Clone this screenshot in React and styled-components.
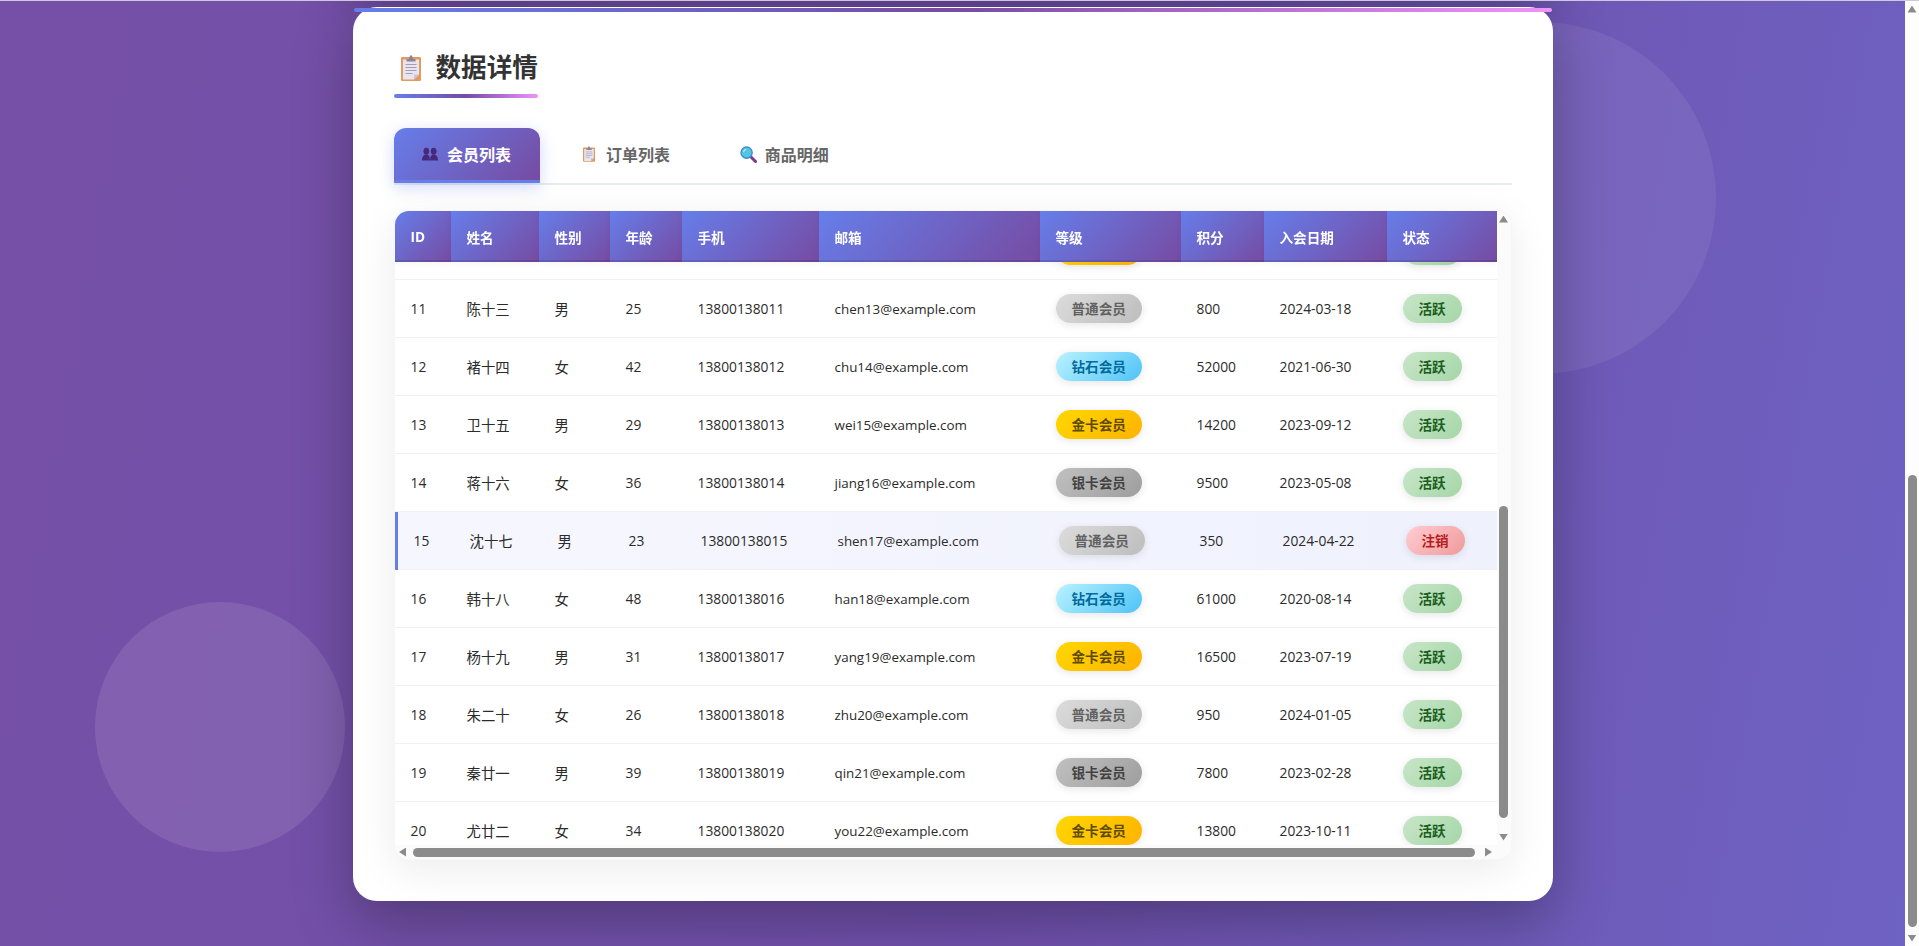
import { useLayoutEffect, useRef } from "react";
import styled, { createGlobalStyle } from "styled-components";

const Global = createGlobalStyle`
  * { box-sizing: border-box; }
  html, body { height: 100%; overflow: hidden; }
  body {
    margin: 0;
    font-family: "Open Sans", "Noto Sans CJK SC", sans-serif;
    color: #333;
  }
`;

const Shell = styled.div`
  position: relative;
  display: flex;
  height: 100vh;
  overflow: hidden;
  border-top: 1px solid #cfc8dc;
`;

const Viewport = styled.main`
  position: relative;
  flex: 1;
  min-width: 0;
  display: flex;
  flex-direction: column;
  justify-content: flex-end;
  align-items: center;
  gap: 26px;
  padding-bottom: 45px;
  overflow: hidden;
  background: linear-gradient(100deg, #7650a6 0%, #7050ac 55%, #6e62c2 100%);
`;

const Circle = styled.div`
  position: absolute;
  border-radius: 50%;
  background: rgba(255, 255, 255, ${(p) => p.$alpha});
  width: ${(p) => p.$size}px;
  height: ${(p) => p.$size}px;
  left: ${(p) => p.$left}px;
  top: ${(p) => p.$top}px;
`;

const Card = styled.section`
  position: relative;
  flex: none;
  width: 1200px;
  background: #fff;
  border: 1px solid rgba(255, 255, 255, 0.85);
  border-radius: 24px;
  padding: 40px;
  box-shadow: 0 20px 60px rgba(0, 0, 0, 0.3);

  &::before {
    content: "";
    position: absolute;
    top: 0;
    left: 0;
    right: 0;
    height: 4px;
    border-radius: 2px;
    background: linear-gradient(90deg, #667eea, #764ba2, #f093fb);
  }
`;

const PrevCard = styled(Card)`
  height: 120px;
`;

const TitleRow = styled.div`
  display: flex;
`;

const Title = styled.h2`
  position: relative;
  display: inline-flex;
  align-items: center;
  height: 50px;
  margin: 0 0 30px;
  padding: 0 0 10px 7px;
  font-size: 25.6px;
  line-height: 38px;
  font-weight: 700;
  color: #333;

  svg { margin-right: 15px; }

  &::after {
    content: "";
    position: absolute;
    left: 0;
    right: 0;
    bottom: 0;
    height: 4px;
    border-radius: 2px;
    background: linear-gradient(90deg, #667eea, #764ba2, #f093fb);
  }
`;

const Tabs = styled.div`
  display: flex;
  gap: 12.5px;
  height: 57px;
  margin-bottom: 25px;
  border-bottom: 2px solid #e9ecef;
`;

const Tab = styled.button`
  display: flex;
  align-items: center;
  height: 55px;
  padding: 0 28.8px 0 28.4px;
  border: 0;
  border-bottom: 3px solid ${(p) => (p.$active ? "#667eea" : "transparent")};
  border-radius: 12px 12px 0 0;
  font-family: inherit;
  font-size: 16px;
  font-weight: 600;
  color: ${(p) => (p.$active ? "#fff" : "#666")};
  background: ${(p) => (p.$active ? "linear-gradient(135deg, #667eea, #764ba2)" : "transparent")};
  box-shadow: ${(p) => (p.$active ? "0 4px 15px rgba(102, 126, 234, 0.3)" : "none")};
`;

const TabIcon = styled.span`
  display: flex;
  justify-content: center;
  width: 17px;
  margin-right: 8.2px;
`;

const TableWrap = styled.div`
  display: grid;
  grid-template-columns: 1fr 14px;
  grid-template-rows: 1fr 14px;
  height: 650px;
  overflow: hidden;
  background: #fff;
  border: 1px solid #f7f7f7;
  border-radius: 15px;
  box-shadow: 0 10px 40px rgba(0, 0, 0, 0.08);
`;

const TableScroll = styled.div`
  min-width: 0;
  min-height: 0;
  overflow: hidden;
`;

const Table = styled.table`
  width: 1102px;
  table-layout: fixed;
  border-collapse: separate;
  border-spacing: 0;
`;

const Th = styled.th`
  position: sticky;
  top: 0;
  z-index: 2;
  height: 51px;
  padding: 0 16px;
  text-align: left;
  font-size: 13.6px;
  font-weight: 700;
  color: #fff;
  background: linear-gradient(135deg, #667eea, #764ba2);
  box-shadow: inset 0 -2px rgba(0, 0, 0, 0.1), 0 2px 6px rgba(0, 0, 0, 0.04);
`;

const Row = styled.tr`
  background: ${(p) =>
    p.$hover
      ? "linear-gradient(#667eea, #667eea) left / 3px 100% no-repeat, linear-gradient(90deg, #f6f7fe, #eff1fd)"
      : "transparent"};

  td {
    transform: ${(p) => (p.$hover ? "translateX(3px)" : "none")};
  }
`;

const Td = styled.td`
  height: 58px;
  padding: 0 16px;
  border-bottom: 1px solid #f0f0f0;
  font-size: ${(p) => p.$size || 13.8}px;
  color: #2b2b2b;
  white-space: nowrap;
`;

const levelColors = {
  普通会员: ["#dcdcdc", "#bdbdbd", "#616161"],
  钻石会员: ["#b9f2ff", "#4fc3f7", "#01699b"],
  金卡会员: ["#ffd700", "#ffb300", "#5d4a00"],
  银卡会员: ["#c0c0c0", "#9e9e9e", "#424242"],
  活跃: ["#c8e6c9", "#a5d6a7", "#1b5e20"],
  注销: ["#ffcdd2", "#ef9a9a", "#b71c1c"],
};

const Badge = styled.span`
  display: inline-block;
  padding: 5px 16px;
  border-radius: 20px;
  font-size: 13.6px;
  line-height: 19px;
  font-weight: 600;
  color: ${(p) => levelColors[p.$kind][2]};
  background: linear-gradient(135deg, ${(p) => levelColors[p.$kind][0]}, ${(p) => levelColors[p.$kind][1]});
  box-shadow: 0 2px 8px rgba(0, 0, 0, 0.1);
`;

// headless chrome draws no real scrollbars, so these are plain elements
const ScrollTrack = styled.div`
  flex: none;
  display: flex;
  flex-direction: ${(p) => (p.$horizontal ? "row" : "column")};
  justify-content: space-between;
  background: #fbfbfb;
  min-width: 0;
  min-height: 0;
`;

const PageTrack = styled(ScrollTrack)`
  width: 14px;
  background: #fdfdfd;
`;

const ScrollCorner = styled.div`
  background: #fbfbfb;
`;

const arrowShape = {
  up: "polygon(50% 0, 100% 100%, 0 100%)",
  down: "polygon(0 0, 100% 0, 50% 100%)",
  left: "polygon(100% 0, 100% 100%, 0 50%)",
  right: "polygon(0 0, 100% 50%, 0 100%)",
};

const ArrowBox = styled.div`
  flex: none;
  width: ${(p) => (p.$horizontal ? 16 : 14)}px;
  height: ${(p) => (p.$horizontal ? 14 : 16)}px;
  display: flex;
  align-items: center;
  justify-content: center;

  &::after {
    content: "";
    width: ${(p) => (p.$horizontal ? 7 : 9)}px;
    height: ${(p) => (p.$horizontal ? 9 : 7)}px;
    background: #8b8b8b;
    clip-path: ${(p) => arrowShape[p.$dir]};
  }
`;

const ThumbRail = styled.div`
  flex: 1;
  min-width: 0;
  min-height: 0;
  display: flex;
  flex-direction: ${(p) => (p.$horizontal ? "row" : "column")};
  align-items: center;
`;

const Thumb = styled.div`
  flex: none;
  background: #8b8b8b;
  border-radius: 5px;
  ${(p) =>
    p.$horizontal
      ? `height: 9px; width: ${p.$length}px; margin-left: ${p.$start}px;`
      : `width: 9px; height: ${p.$length}px; margin-top: ${p.$start}px;`}
`;

const ClipboardIcon = ({ width, height }) => (
  <svg width={width} height={height} viewBox="0 0 20 26">
    <rect x="0" y="2" width="20" height="24" rx="1.2" fill="#e39a5c" />
    <path d="M2 4.5h16v15l-5 5H2z" fill="#e9e5f0" />
    <path d="M18 19.5l-5 5v-5z" fill="#c9c3d2" />
    <path d="M5.5 6.5V4H8l1-3.5h2L12 4h2.5v2.5z" fill="#8c8494" />
    <path d="M4.5 9.5h11M4.5 12.5h11M4.5 15.5h11M4.5 18.5h7" stroke="#a69eb0" strokeWidth="1.1" />
  </svg>
);

const PeopleIcon = () => (
  <svg width="16" height="14" viewBox="0 0 17 14">
    <g fill="#45297a">
      <ellipse cx="4.6" cy="4" rx="3" ry="3.6" />
      <path d="M0 14c0-4 1.6-6.5 4.6-6.5s3.8 2.5 3.8 6.5z" />
      <ellipse cx="12.4" cy="4" rx="3" ry="3.6" />
      <path d="M8.6 14c0-4 .8-6.5 3.8-6.5s4.6 2.5 4.6 6.5z" />
    </g>
  </svg>
);

const SearchIcon = () => (
  <svg width="17" height="17" viewBox="0 0 17 17">
    <path d="M10.5 10.5L15.5 15.5" stroke="#7a3b8c" strokeWidth="3" strokeLinecap="round" />
    <circle cx="6.6" cy="6.6" r="5.6" fill="#52c6e0" stroke="#3d8fd0" strokeWidth="1.4" />
    <path d="M3.5 6a3.4 3.4 0 0 1 2.6-2.6" stroke="#b5ecf5" strokeWidth="1.2" fill="none" />
  </svg>
);

const columns = [
  ["ID", 56], ["姓名", 88], ["性别", 71], ["年龄", 72], ["手机", 137],
  ["邮箱", 221], ["等级", 141], ["积分", 83], ["入会日期", 123], ["状态", 110],
];

const P = "普通会员", D = "钻石会员", G = "金卡会员", S = "银卡会员";

const members = [
  [10, "王十二", "女", 33, "wang12@example.com", G, 18200, "2022-12-03", "活跃"],
  [11, "陈十三", "男", 25, "chen13@example.com", P, 800, "2024-03-18", "活跃"],
  [12, "褚十四", "女", 42, "chu14@example.com", D, 52000, "2021-06-30", "活跃"],
  [13, "卫十五", "男", 29, "wei15@example.com", G, 14200, "2023-09-12", "活跃"],
  [14, "蒋十六", "女", 36, "jiang16@example.com", S, 9500, "2023-05-08", "活跃"],
  [15, "沈十七", "男", 23, "shen17@example.com", P, 350, "2024-04-22", "注销"],
  [16, "韩十八", "女", 48, "han18@example.com", D, 61000, "2020-08-14", "活跃"],
  [17, "杨十九", "男", 31, "yang19@example.com", G, 16500, "2023-07-19", "活跃"],
  [18, "朱二十", "女", 26, "zhu20@example.com", P, 950, "2024-01-05", "活跃"],
  [19, "秦廿一", "男", 39, "qin21@example.com", S, 7800, "2023-02-28", "活跃"],
  [20, "尤廿二", "女", 34, "you22@example.com", G, 13800, "2023-10-11", "活跃"],
];

export default function App() {
  const tableRef = useRef(null);

  useLayoutEffect(() => {
    // row 10 sits half under the sticky header
    tableRef.current.scrollTop = 40;
  }, []);

  return (
    <>
      <Global />
      <Shell>
        <Viewport>
          <Circle $size={352} $left={1364} $top={21} $alpha={0.07} />
          <Circle $size={250} $left={95} $top={601} $alpha={0.1} />
          <PrevCard />
          <Card>
            <TitleRow>
              <Title>
                <ClipboardIcon width={20} height={26} />
                数据详情
              </Title>
            </TitleRow>
            <Tabs>
              <Tab $active>
                <TabIcon><PeopleIcon /></TabIcon>
                会员列表
              </Tab>
              <Tab>
                <TabIcon><ClipboardIcon width={12} height={16} /></TabIcon>
                订单列表
              </Tab>
              <Tab>
                <TabIcon><SearchIcon /></TabIcon>
                商品明细
              </Tab>
            </Tabs>
            <TableWrap>
              <TableScroll ref={tableRef}>
                <Table>
                  <colgroup>
                    {columns.map(([name, width]) => <col key={name} width={width} />)}
                  </colgroup>
                  <thead>
                    <tr>
                      {columns.map(([name]) => <Th key={name}>{name}</Th>)}
                    </tr>
                  </thead>
                  <tbody>
                    {members.map(([id, name, sex, age, email, level, points, date, status]) => (
                      <Row key={id} $hover={id === 15}>
                        <Td>{id}</Td>
                        <Td $size={14.4}>{name}</Td>
                        <Td $size={14.4}>{sex}</Td>
                        <Td>{age}</Td>
                        <Td>{13800138000 + id}</Td>
                        <Td $size={13.4}>{email}</Td>
                        <Td><Badge $kind={level}>{level}</Badge></Td>
                        <Td>{points}</Td>
                        <Td>{date}</Td>
                        <Td><Badge $kind={status}>{status}</Badge></Td>
                      </Row>
                    ))}
                  </tbody>
                </Table>
              </TableScroll>
              <ScrollTrack>
                <ArrowBox $dir="up" />
                <ThumbRail><Thumb $start={279} $length={312} /></ThumbRail>
                <ArrowBox $dir="down" />
              </ScrollTrack>
              <ScrollTrack $horizontal>
                <ArrowBox $horizontal $dir="left" />
                <ThumbRail $horizontal><Thumb $horizontal $start={2} $length={1062} /></ThumbRail>
                <ArrowBox $horizontal $dir="right" />
              </ScrollTrack>
              <ScrollCorner />
            </TableWrap>
          </Card>
        </Viewport>
        <PageTrack>
          <ArrowBox $dir="up" />
          <ThumbRail><Thumb $start={458} $length={452} /></ThumbRail>
          <ArrowBox $dir="down" />
        </PageTrack>
      </Shell>
    </>
  );
}
